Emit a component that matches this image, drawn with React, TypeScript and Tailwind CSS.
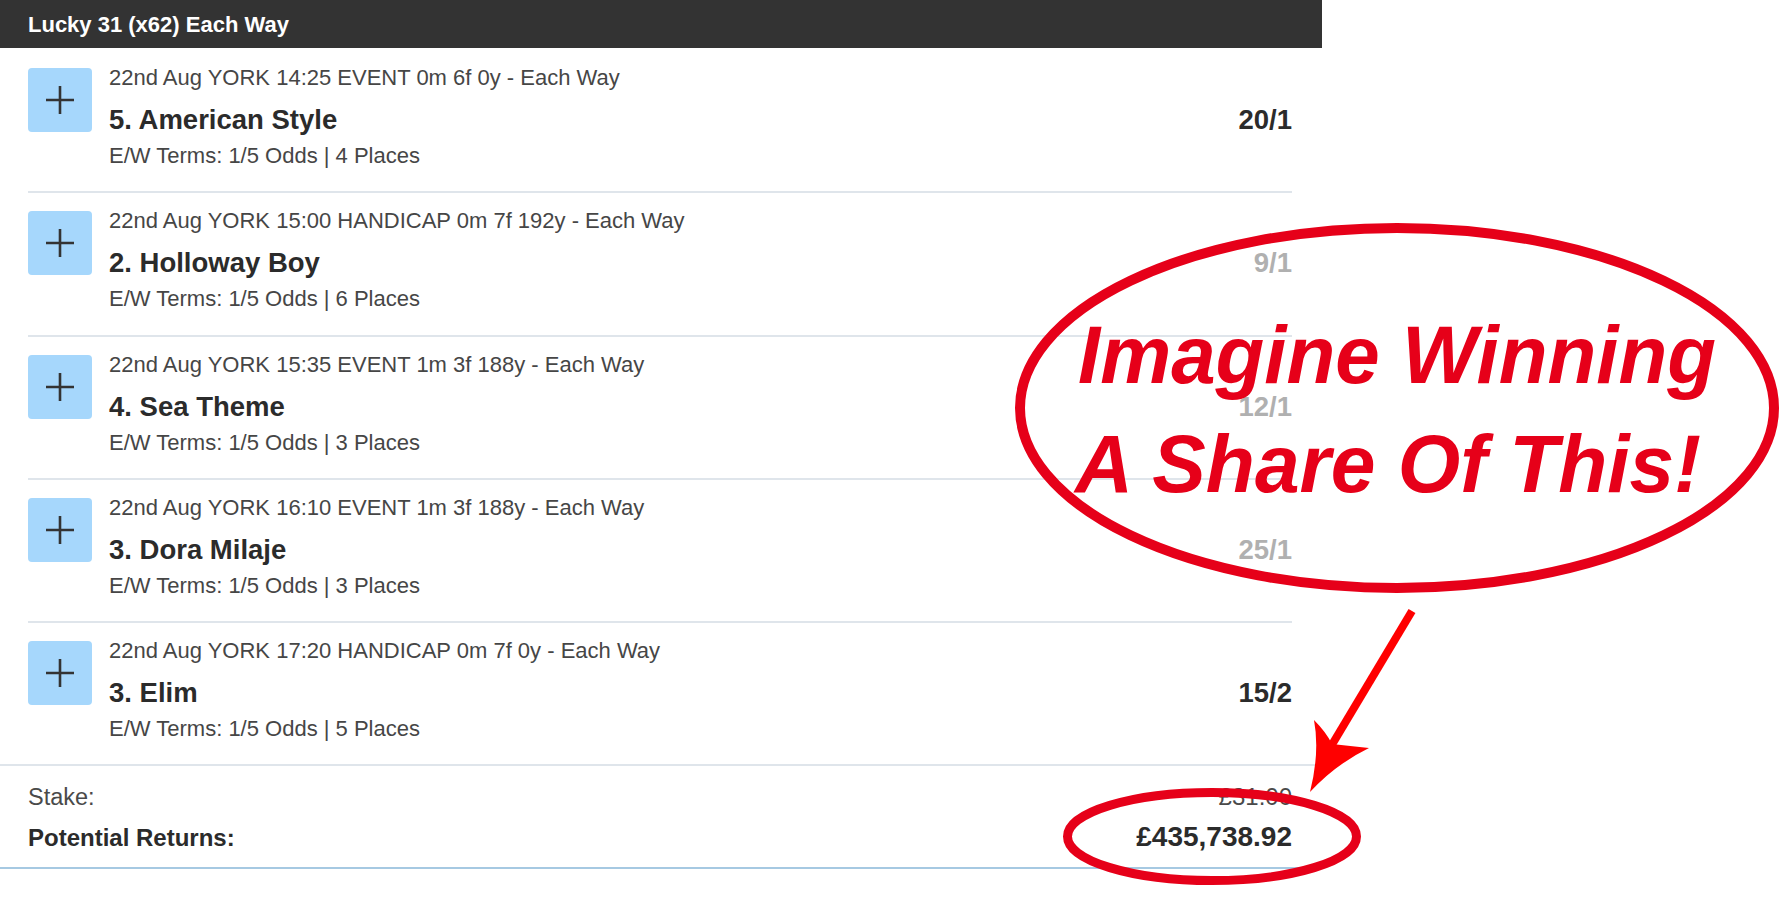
import React from "react";

type Bet = {
   meta: string;
   name: string;
   terms: string;
   odds: string;
   muted?: boolean;
};

const bets: Bet[] = [
   {
      meta: "22nd Aug YORK 14:25 EVENT 0m 6f 0y - Each Way",
      name: "5. American Style",
      terms: "E/W Terms: 1/5 Odds | 4 Places",
      odds: "20/1",
   },
   {
      meta: "22nd Aug YORK 15:00 HANDICAP 0m 7f 192y - Each Way",
      name: "2. Holloway Boy",
      terms: "E/W Terms: 1/5 Odds | 6 Places",
      odds: "9/1",
      muted: true,
   },
   {
      meta: "22nd Aug YORK 15:35 EVENT 1m 3f 188y - Each Way",
      name: "4. Sea Theme",
      terms: "E/W Terms: 1/5 Odds | 3 Places",
      odds: "12/1",
      muted: true,
   },
   {
      meta: "22nd Aug YORK 16:10 EVENT 1m 3f 188y - Each Way",
      name: "3. Dora Milaje",
      terms: "E/W Terms: 1/5 Odds | 3 Places",
      odds: "25/1",
      muted: true,
   },
   {
      meta: "22nd Aug YORK 17:20 HANDICAP 0m 7f 0y - Each Way",
      name: "3. Elim",
      terms: "E/W Terms: 1/5 Odds | 5 Places",
      odds: "15/2",
   },
];

function PlusBox() {
   return (
      <button className="mt-[4px] flex h-[64px] w-[64px] shrink-0 items-center justify-center rounded-[4px] bg-[#a6d7fc]">
         <svg width="28" height="28" viewBox="0 0 28 28">
            <path d="M14 0v28M0 14h28" stroke="#333" strokeWidth="2.6" />
         </svg>
      </button>
   );
}

function BetRow({ bet, last }: { bet: Bet; last: boolean }) {
   return (
      <div
         className={
            "flex gap-[17px] pt-[14px] pb-[21.25px] " +
            (last ? "" : "border-b-2 border-[#dfe5eb]")
         }
      >
         <PlusBox />
         <div className="flex-1">
            <div className="text-[22px] leading-[28px] text-[#464646]">{bet.meta}</div>
            <div className="mt-[11px] flex items-baseline justify-between">
               <span className="text-[27.5px] font-bold leading-[34px] text-[#2b2b2b]">
                  {bet.name}
               </span>
               <span
                  className={
                     "text-[27.5px] font-bold leading-[34px] " +
                     (bet.muted ? "text-[#b0b0b0]" : "text-[#2b2b2b]")
                  }
               >
                  {bet.odds}
               </span>
            </div>
            <div className="mt-[5px] text-[22px] leading-[28px] text-[#464646]">{bet.terms}</div>
         </div>
      </div>
   );
}

function Annotation() {
   return (
      <svg
         className="pointer-events-none absolute left-0 top-0"
         width="1788"
         height="900"
         viewBox="0 0 1788 900"
      >
         <ellipse cx="1397" cy="408" rx="377" ry="180" fill="none" stroke="#e60019" strokeWidth="10" />
         <text
            x="1078"
            y="383"
            fontFamily="'Liberation Sans', Arial, sans-serif"
            fontWeight="700"
            fontStyle="italic"
            fontSize="82"
            fill="#e60019"
            textLength="638"
            lengthAdjust="spacingAndGlyphs"
         >
            Imagine Winning
         </text>
         <text
            x="1075"
            y="492"
            fontFamily="'Liberation Sans', Arial, sans-serif"
            fontWeight="700"
            fontStyle="italic"
            fontSize="82"
            fill="#e60019"
            textLength="626"
            lengthAdjust="spacingAndGlyphs"
         >
            A Share Of This!
         </text>
         <line x1="1412" y1="611" x2="1330" y2="748" stroke="#ff0000" strokeWidth="8" />
         <path
            d="M1310 792 Q1320 752 1314 720 Q1326 732 1332 744 Q1350 746 1369 748 Q1336 764 1310 792 Z"
            fill="#ff0000"
         />
         <ellipse cx="1212" cy="836.5" rx="144.5" ry="44" fill="none" stroke="#e60019" strokeWidth="9" />
      </svg>
   );
}

export default function App() {
   return (
      <div className="relative min-h-[900px] w-full bg-white font-['Liberation_Sans',Arial,sans-serif]">
         <div className="w-[1322px]">
            <div className="flex h-[48px] items-center bg-[#333333] px-[28px]">
               <span className="text-[22px] font-bold text-white">Lucky 31 (x62) Each Way</span>
            </div>
            <div className="pt-[2px] pl-[28px] pr-[30px]">
               {bets.map((b, i) => (
                  <BetRow key={b.name} bet={b} last={i === bets.length - 1} />
               ))}
            </div>
            <div className="border-t-2 border-b-2 border-t-[#dfe5eb] border-b-[#a6c9e2] pt-[10.75px] pb-[9px] pl-[28px] pr-[30px]">
               <div className="flex items-baseline justify-between leading-[40px]">
                  <span className="text-[23.5px] text-[#4a4a4a]">Stake:</span>
                  <span className="text-[24px] text-[#4a4a4a]">£31.00</span>
               </div>
               <div className="flex items-baseline justify-between leading-[40px]">
                  <span className="text-[24px] font-bold text-[#2b2b2b]">Potential Returns:</span>
                  <span className="text-[28px] font-bold text-[#2b2b2b]">£435,738.92</span>
               </div>
            </div>
         </div>
         <Annotation />
      </div>
   );
}
